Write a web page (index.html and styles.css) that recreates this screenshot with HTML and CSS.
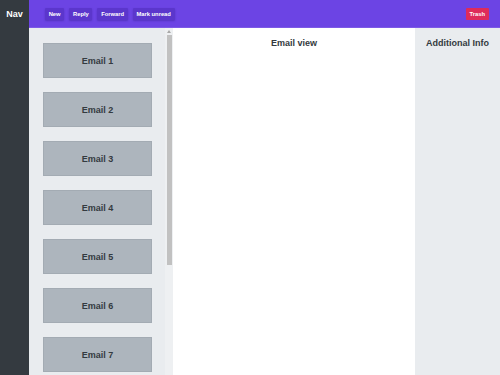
FILE: index.html
```html
<!DOCTYPE html>
<html>
<head>
<meta charset="utf-8">
<link rel="stylesheet" href="styles.css">
</head>
<body>
<div class="app">
  <nav class="nav">Nav</nav>
  <div class="main">
    <header class="toolbar">
      <div class="actions">
        <button class="btn">New</button>
        <button class="btn">Reply</button>
        <button class="btn">Forward</button>
        <button class="btn">Mark unread</button>
      </div>
      <button class="btn danger">Trash</button>
    </header>
    <div class="content">
      <div class="list-pane">
        <div class="list">
          <div class="email">Email 1</div>
          <div class="email">Email 2</div>
          <div class="email">Email 3</div>
          <div class="email">Email 4</div>
          <div class="email">Email 5</div>
          <div class="email">Email 6</div>
          <div class="email">Email 7</div>
          <div class="email">Email 8</div>
          <div class="email">Email 9</div>
          <div class="email">Email 10</div>
        </div>
        <div class="scrollbar">
          <div class="arrow"></div>
          <div class="thumb"></div>
        </div>
      </div>
      <section class="view"><h2 class="title">Email view</h2></section>
      <aside class="info"><h2 class="title">Additional Info</h2></aside>
    </div>
  </div>
</div>
</body>
</html>
```
FILE: styles.css
```css
* { box-sizing: border-box; }
html, body { margin: 0; height: 100%; }
body { font-family: "Liberation Sans", Arial, sans-serif; color: #343a40; }
.app { display: flex; height: 100vh; }
.nav {
  width: 29px; flex: none; background: #343a40; color: #fff;
  font-weight: bold; font-size: 9px; text-align: center; padding-top: 9px;
}
.main { flex: 1; display: flex; flex-direction: column; min-width: 0; }
.toolbar {
  height: 28px; flex: none; background: #6c44e4; display: flex;
  align-items: center; justify-content: space-between; padding: 0 11px 0 16px;
  border-bottom: 1px solid #7d5ae6;
}
.actions { display: flex; gap: 5px; }
.btn {
  border: 0; background: #5b36cc; color: #fff; font-family: inherit;
  font-weight: bold; font-size: 5.8px; padding: 3px 3.7px; height: 12px; line-height: 6px;
  border-radius: 1px; box-shadow: 0 1px 2px rgba(40,20,120,0.35);
}
.danger { background: #de2b5a; box-shadow: none; padding: 3px 4px; }
.content { flex: 1; display: flex; min-height: 0; }
.list-pane { width: 144px; flex: none; display: flex; background: #e9ecef; }
.list {
  flex: 1; overflow: hidden;
  padding: 15px 13px 14px 14px; display: flex; flex-direction: column; gap: 14px;
}
.scrollbar {
  width: 8px; flex: none; background: #eef0f2; display: flex; flex-direction: column;
  align-items: center; padding-top: 2px;
}
.arrow {
  width: 0; height: 0; border-left: 2px solid transparent; border-right: 2px solid transparent;
  border-bottom: 3px solid #a8a8a8; margin-bottom: 2px;
}
.thumb { width: 5px; height: 230px; background: #c1c1c1; margin-left: 1px; }
.email {
  flex: none; height: 35px; background: #adb5bd; border: 1px solid #a3abb3;
  display: flex; align-items: center; justify-content: center;
  font-weight: bold; font-size: 9px;
}
.view { flex: 1; background: #fff; }
.info { width: 85px; flex: none; background: #e9ecef; }
.title { margin: 0; padding-top: 10px; text-align: center; font-size: 9px; font-weight: bold; }
```
